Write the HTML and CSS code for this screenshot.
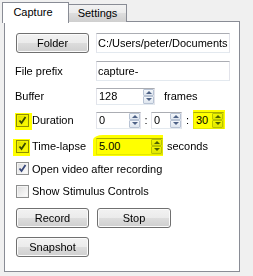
FILE: index.html
```html
<!DOCTYPE html>
<html lang="en">
<head>
    <meta charset="UTF-8">
    <title>Capture</title>
    <link rel="stylesheet" href="styles.css">
</head>
<body>
    <div class="tabs">
        <div class="tab active">Capture</div>
        <div class="tab">Settings</div>
    </div>
    <div class="pane">
        <div class="row row-folder">
            <div class="btn btn-wide">Folder</div>
            <div class="field path">C:/Users/peter/Documents</div>
        </div>
        <div class="row row-prefix">
            <div class="label">File prefix</div>
            <div class="field path">capture-</div>
        </div>
        <div class="row row-buffer">
            <div class="label">Buffer</div>
            <div class="spin w-buffer"><span class="val">128</span><span class="arrows"><i class="up"></i><i class="down"></i></span></div>
            <span class="unit">frames</span>
        </div>
        <div class="row row-duration">
            <div class="label check-label"><span class="check on hl hl-box1"></span>Duration</div>
            <div class="spin w-hours"><span class="val">0</span><span class="arrows"><i class="up"></i><i class="down"></i></span></div>
            <span class="sep">:</span>
            <div class="spin w-min"><span class="val">0</span><span class="arrows"><i class="up"></i><i class="down"></i></span></div>
            <span class="sep sep2">:</span>
            <div class="spin w-sec hl hl-sec"><span class="val">30</span><span class="arrows"><i class="up"></i><i class="down"></i></span></div>
        </div>
        <div class="row row-lapse">
            <div class="label check-label"><span class="check on hl hl-box2"></span>Time-lapse</div>
            <div class="spin w-lapse hl hl-lapse"><span class="val">5.00</span><span class="arrows"><i class="up"></i><i class="down"></i></span></div>
            <span class="unit unit-sec">seconds</span>
        </div>
        <div class="row row-open">
            <span class="check on"></span>Open video after recording
        </div>
        <div class="row row-stim">
            <span class="check"></span>Show Stimulus Controls
        </div>
        <div class="row row-record">
            <div class="btn btn-wide">Record</div>
            <div class="btn btn-stop">Stop</div>
        </div>
        <div class="row row-snap">
            <div class="btn btn-wide">Snapshot</div>
        </div>
    </div>
</body>
</html>
```

FILE: styles.css
```css
body {
    margin: 0;
    background-color: #f0f0f0;
    font-family: 'Liberation Sans', Arial, sans-serif;
    font-size: 11px;
    color: #000;
}

.tabs {
    display: flex;
    align-items: flex-end;
    height: 22px;
    padding-left: 2px;
    position: relative;
    z-index: 1;
}

.tab {
    box-sizing: border-box;
    height: 18px;
    width: 59px;
    border: 1px solid #898c95;
    border-bottom: none;
    background: linear-gradient(#f2f2f2, #ebebeb 50%, #dddddd 50%, #cfcfcf);
    text-align: center;
    line-height: 17px;
    margin-left: -1px;
}

.tab.active {
    height: 21px;
    width: 67px;
    margin-left: 0;
    margin-bottom: -1px;
    background: #fff;
    line-height: 18px;
    padding-right: 5px;
}

.pane {
    box-sizing: border-box;
    margin-left: 4px;
    margin-top: -1px;
    width: 236px;
    height: 251px;
    border: 1px solid #898c95;
    background-color: #fff;
    padding-left: 11px;
    padding-top: 11px;
}

.row {
    display: flex;
    align-items: center;
    height: 20px;
}

.row-prefix { margin-top: 8px; }
.row-buffer { margin-top: 5px; }
.row-duration { margin-top: 4px; }
.row-lapse { margin-top: 6px; }
.row-open { margin-top: 2px; height: 21px; }
.row-stim { margin-top: 2px; }
.row-record { margin-top: 7px; }
.row-snap { margin-top: 9px; }

.btn {
    box-sizing: border-box;
    height: 20px;
    border: 1px solid #707070;
    border-radius: 3px;
    background: linear-gradient(#f2f2f2, #ebebeb 50%, #dddddd 50%, #cfcfcf);
    box-shadow: inset 0 0 0 1px #fbfbfb;
    text-align: center;
    line-height: 18px;
}

.btn-wide { width: 73px; }
.btn-stop { width: 74px; margin-left: 8px; }

.field {
    box-sizing: border-box;
    height: 20px;
    border: 1px solid #e2e3ea;
    border-top-color: #abadb3;
    border-bottom-color: #e3e9ef;
    background: #fff;
    line-height: 18px;
    padding-left: 1px;
}

.path {
    width: 134px;
    margin-left: 7px;
}

.row-prefix .path { margin-left: 0; }

.label {
    width: 81px;
    margin-left: -1px;
    display: flex;
    align-items: center;
}

.check-label { margin-left: 0; width: 80px; }

.check {
    box-sizing: border-box;
    width: 13px;
    height: 13px;
    border: 1px solid #8e8f8f;
    background: linear-gradient(135deg, #dcdcdc, #fff);
    box-shadow: inset 0 0 0 1px #f4f4f4;
    margin-right: 3px;
    flex: none;
}

.check.on {
    background: url("data:image/svg+xml;utf8,<svg xmlns='http://www.w3.org/2000/svg' width='11' height='11'><path d='M2.5 5.5 L4.5 8 L8.5 2' fill='none' stroke='%2338487a' stroke-width='1.8'/></svg>") center no-repeat, linear-gradient(135deg, #dcdcdc, #fff);
}

.spin {
    box-sizing: border-box;
    height: 17px;
    border: 1px solid #e2e3ea;
    border-top-color: #abadb3;
    border-bottom-color: #e3e9ef;
    background: #fff;
    display: flex;
    align-items: stretch;
}

.spin .val {
    flex: 1;
    padding-left: 2px;
    line-height: 15px;
}

.arrows {
    width: 11px;
    display: flex;
    flex-direction: column;
}

.arrows i {
    flex: 1;
    box-sizing: border-box;
    border: 1px solid #b8c3d4;
    border-radius: 1px;
    background: linear-gradient(#f4f7fb, #dfe6ef);
    display: flex;
    align-items: center;
    justify-content: center;
}

.arrows i::before {
    content: "";
    border-left: 3px solid transparent;
    border-right: 3px solid transparent;
}

.arrows .up::before { border-bottom: 3px solid #4d6185; }
.arrows .down::before { border-top: 3px solid #4d6185; }

.w-buffer { width: 59px; }
.w-hours { width: 45px; }
.w-min { width: 31px; }
.w-sec { width: 31px; }
.w-lapse { width: 67px; }

.sep { width: 10px; text-align: center; }
.sep2 { width: 11px; }

.unit { margin-left: 9px; }
.unit-sec { margin-left: 4px; }

.hl { position: relative; }

.hl::after {
    content: "";
    position: absolute;
    background: #ffff00;
    mix-blend-mode: multiply;
}

.hl-box1::after { left: -2px; top: -2px; right: -4px; bottom: -4px; }
.hl-box2::after { left: -4px; top: -2px; right: -2px; bottom: -4px; }
.hl-sec::after { left: -1px; top: -3px; right: -2px; bottom: -1px; }
.hl-lapse::after { left: -4px; top: -4px; right: -1px; bottom: -2px; border-top-left-radius: 10px 5px; }
```
